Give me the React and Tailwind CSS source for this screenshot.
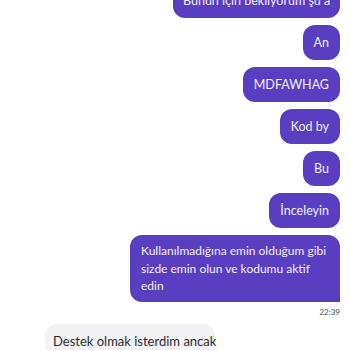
import React from 'react';

const outgoing = ['An', 'MDFAWHAG', 'Kod by', 'Bu', 'İnceleyin'];

function Bubble({ children }) {
  return (
    <div className="bg-[#5a3ec2] text-[#f2efff] text-[12.5px] leading-[17px] px-[11px] py-[9px] rounded-[12px]">
      {children}
    </div>
  );
}

export default function App() {
  return (
    <div
      className="w-[350px] h-[350px] overflow-hidden bg-white"
      style={{ fontFamily: 'Lato, "Noto Sans", sans-serif' }}
    >
      <div className="flex flex-col items-end pr-[10px] gap-[7px] -mt-[17px]">
        <div className="bg-[#5a3ec2] text-[#f2efff] text-[12.5px] leading-[17px] pl-[10px] pr-[14px] py-[9px] rounded-[12px] w-[167px] whitespace-nowrap overflow-hidden">
          Bunun için bekliyorum şu a
        </div>
        {outgoing.map((t) => (
          <Bubble key={t}>{t}</Bubble>
        ))}
        <div className="bg-[#5a3ec2] text-[#f2efff] text-[12px] leading-[17.5px] pl-[11px] pr-[8px] py-[7px] rounded-[12px] rounded-br-none w-[210px]">
          Kullanılmadığına emin olduğum gibi sizde emin olun ve kodumu aktif edin
        </div>
      </div>
      <div className="flex justify-end pr-[10px] mt-[5px]">
        <span className="text-[8px] leading-[10px] text-[#6b6f85] font-bold">22:39</span>
      </div>
      <div className="flex pl-[45px] mt-[7px]">
        <div className="bg-[#f3f3f5] text-[#2b2b33] text-[13px] leading-[18px] px-[8px] py-[8px] rounded-[12px] w-[170px] whitespace-nowrap">
          Destek olmak isterdim ancak
        </div>
      </div>
    </div>
  );
}
